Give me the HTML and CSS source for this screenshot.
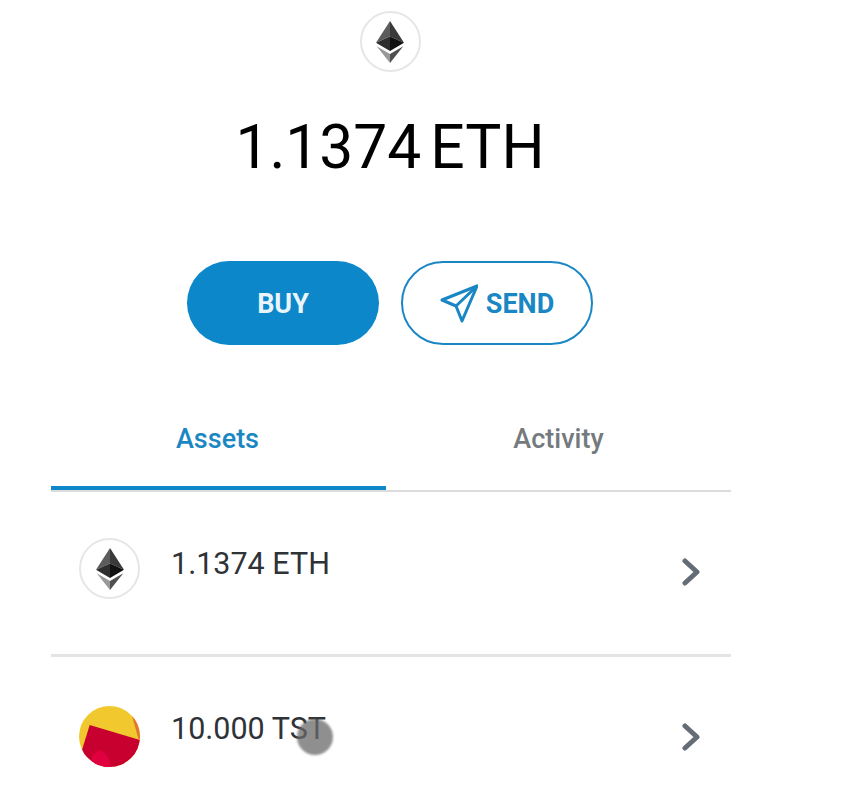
FILE: index.html
```html
<!DOCTYPE html>
<html lang="en">

<head>
  <meta charset="UTF-8" />
  <meta name="viewport" content="width=device-width, initial-scale=1" />
  <title>Wallet</title>
  <link rel="stylesheet" href="styles.css">
</head>

<body>
  <div class="screen">
    <div class="overview">
      <div class="token-logo">
        <svg viewBox="0 0 40 60" width="28" height="42"><use href="#eth" /></svg>
      </div>
      <div class="balance"><span>1.1374</span> <span>ETH</span></div>
      <div class="actions">
        <button class="btn btn-filled">BUY</button>
        <button class="btn btn-outline">
          <svg viewBox="0 0 38 40" width="38" height="40" fill="none" stroke="#1a87c4" stroke-width="3" stroke-linejoin="round" stroke-linecap="round">
            <path d="M2 16 L37 2 L22 37 L16 22 Z" />
            <path d="M16 22 L37 2" />
          </svg>
          SEND
        </button>
      </div>
    </div>

    <!-- Tabs -->
    <div class="tabs">
      <div class="tab active">Assets</div>
      <div class="tab">Activity</div>
    </div>

    <!-- Token list -->
    <div class="token-row">
      <div class="token-logo">
        <svg viewBox="0 0 40 60" width="28" height="42"><use href="#eth" /></svg>
      </div>
      <span class="token-name">1.1374 ETH</span>
      <svg class="chevron" viewBox="0 0 18 28" width="18" height="28" fill="none" stroke="#646d75" stroke-width="5" stroke-linecap="round" stroke-linejoin="round">
        <path d="M3 3 L15 14 L3 25" />
      </svg>
    </div>
    <div class="token-row">
      <svg class="token-avatar" viewBox="0 0 61 61" width="61" height="61">
        <clipPath id="avatarClip"><circle cx="30.5" cy="30.5" r="30.5" /></clipPath>
        <g clip-path="url(#avatarClip)">
          <rect width="61" height="61" fill="#f1c92f" />
          <path d="M10.7 19 L61 34 L61 61 L0 61 L3.3 43 Z" fill="#c70030" />
          <path d="M53 10 L61 10 L61 34 L59.5 33 Z" fill="#e2762a" />
          <path d="M12 61 L13 51 Q17 45 21 44 Q28 47 31 56 L32 61 Z" fill="#e0003f" />
        </g>
      </svg>
      <span class="token-name">10.000 TST</span>
      <svg class="chevron" viewBox="0 0 18 28" width="18" height="28" fill="none" stroke="#646d75" stroke-width="5" stroke-linecap="round" stroke-linejoin="round">
        <path d="M3 3 L15 14 L3 25" />
      </svg>
    </div>
  </div>

  <div class="touch-dot"></div>

  <svg class="defs" width="0" height="0">
    <defs>
      <g id="eth">
        <path d="M20 0 L0 31 L20 22 Z" fill="#5c5c5c" />
        <path d="M20 0 L40 31 L20 22 Z" fill="#3a3a3a" />
        <path d="M0 31 L20 22 L20 43 Z" fill="#2e2e2e" />
        <path d="M40 31 L20 22 L20 43 Z" fill="#111111" />
        <path d="M1 36 L20 47 L20 60 Z" fill="#999999" />
        <path d="M39 36 L20 47 L20 60 Z" fill="#505050" />
      </g>
    </defs>
  </svg>
</body>

</html>
```

FILE: styles.css
```css
html,
body {
  height: 797px;
  overflow: hidden;
}

body {
  margin: 0;
  background: #fff;
  font-family: Roboto, 'Liberation Sans', sans-serif;
  position: relative;
}

.screen {
  width: 680px;
  margin-left: 51px;
}

.overview {
  display: flex;
  flex-direction: column;
  align-items: center;
  padding: 11px 2px 0 0;
}

.token-logo {
  width: 61px;
  height: 61px;
  box-sizing: border-box;
  border: 2px solid #e6e6e6;
  border-radius: 50%;
  display: flex;
  align-items: center;
  justify-content: center;
  flex-shrink: 0;
}

.balance {
  margin-top: 40px;
  font-size: 60.5px;
  line-height: 72px;
  color: #000;
  word-spacing: -6px;
}

.actions {
  display: flex;
  gap: 22px;
  margin-top: 77px;
}

.btn {
  width: 192px;
  height: 84px;
  box-sizing: border-box;
  border-radius: 42px;
  font-family: inherit;
  font-size: 27px;
  font-weight: 700;
  display: flex;
  align-items: center;
  justify-content: center;
  gap: 8px;
  padding: 1px 0 0;
}

.btn-filled {
  background: #0b87ca;
  border: none;
  color: #e9f5fb;
}

.btn-outline {
  background: #fff;
  border: 2px solid #1a87c4;
  color: #1a87c4;
}

.tabs {
  display: flex;
  margin-top: 47px;
  border-bottom: 2px solid #dcdcdc;
  height: 98px;
}

.tab {
  width: 335px;
  box-sizing: border-box;
  height: 98px;
  padding-top: 30px;
  text-align: center;
  font-size: 27px;
  line-height: 34px;
  font-weight: 500;
  color: #757a7e;
}

.tab + .tab {
  flex: 1;
}

.tab.active {
  color: #1a87c4;
  border-bottom: 4px solid #0b87ca;
  padding-right: 2px;
}

.token-row {
  height: 162px;
  box-sizing: border-box;
  display: flex;
  align-items: flex-start;
  padding: 46px 30px 0 28px;
}

.token-row + .token-row {
  border-top: 3px solid #e4e4e4;
  padding-top: 49px;
  height: 160px;
}

.token-name {
  margin: 7px 0 0 31px;
  font-size: 30.5px;
  line-height: 38px;
  color: #2f3337;
  flex: 1;
}

.token-row + .token-row .token-name {
  margin-top: 4px;
}

.chevron {
  margin: 20px 1px 0 0;
}

.token-row + .token-row .chevron {
  margin-top: 17px;
}

.token-avatar {
  flex-shrink: 0;
}

/* screen recording touch marker */
.touch-dot {
  position: absolute;
  left: 297px;
  top: 719px;
  width: 36px;
  height: 36px;
  border-radius: 50%;
  background: rgba(105, 105, 105, 0.75);
  filter: blur(1px);
}

.defs {
  position: absolute;
}
```
